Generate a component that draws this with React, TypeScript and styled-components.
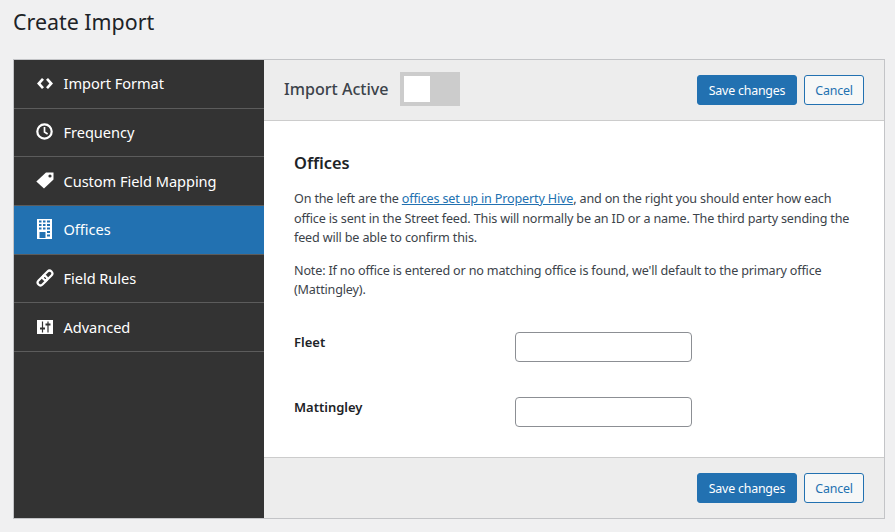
import React from 'react';
import styled, { createGlobalStyle } from 'styled-components';

const GlobalStyle = createGlobalStyle`
  html, body {
    margin: 0;
    padding: 0;
    background: #f0f0f1;
    font-family: "Noto Sans", "Open Sans", sans-serif;
    color: #3c434a;
    font-size: 13px;
    overflow: hidden;
  }
`;

const Page = styled.div`
  padding: 0 10px 0 13px;
  height: 532px;
  box-sizing: border-box;
`;

const Title = styled.h1`
  margin: 0;
  padding: 7px 0 0;
  height: 59px;
  box-sizing: border-box;
  font-size: 21.4px;
  line-height: 29px;
  font-weight: 400;
  color: #1d2327;
`;

const Panel = styled.div`
  display: flex;
  width: 872px;
  height: 460px;
  box-sizing: border-box;
  border: 1px solid #c3c4c7;
  background: #fff;
`;

const Sidebar = styled.nav`
  flex: 0 0 250px;
  background: #333;
`;

const NavItem = styled.a<{ $active?: boolean }>`
  display: flex;
  align-items: center;
  gap: 10.5px;
  height: 48.67px;
  box-sizing: border-box;
  padding: 0 0 1px 22px;
  border-bottom: 1px solid #5c5c5c;
  background: ${(p) => (p.$active ? '#2271b1' : 'transparent')};
  color: #fff;
  font-size: 14.6px;
  letter-spacing: -0.05px;
`;

const IconBox = styled.span`
  display: flex;
  align-items: center;
  justify-content: center;
  width: 17px;
  height: 20px;
`;

const Main = styled.div`
  flex: 1;
  display: flex;
  flex-direction: column;
  min-width: 0;
`;

const Bar = styled.div<{ $bottom?: boolean }>`
  flex: 0 0 61px;
  display: flex;
  align-items: center;
  justify-content: space-between;
  box-sizing: border-box;
  padding: 0 20px;
  background: #ededed;
  border-${(p) => (p.$bottom ? 'top' : 'bottom')}: 1px solid #ccc;
`;

const BarEnd = styled.div`
  margin-left: auto;
  display: flex;
  gap: 7px;
`;

const ActiveGroup = styled.div`
  display: flex;
  align-items: center;
  gap: 11px;
  margin-bottom: 2px;
`;

const ActiveLabel = styled.span`
  font-size: 16.1px;
  font-weight: 500;
  color: #3c434a;
`;

const Toggle = styled.div`
  width: 60px;
  height: 34px;
  box-sizing: border-box;
  padding: 4px;
  background: #ccc;
`;

const Knob = styled.div`
  width: 26px;
  height: 26px;
  background: #fff;
`;

const Button = styled.button<{ $primary?: boolean }>`
  height: 30px;
  width: ${(p) => (p.$primary ? '100px' : '60px')};
  box-sizing: border-box;
  padding: 1px 0 0;
  border-radius: 3px;
  border: 1px solid #2271b1;
  background: ${(p) => (p.$primary ? '#2271b1' : '#f6f7f7')};
  color: ${(p) => (p.$primary ? '#fff' : '#2271b1')};
  font-family: inherit;
  font-size: 12.4px;
  letter-spacing: -0.2px;
  line-height: 26px;
`;

const Content = styled.div`
  flex: 1;
  min-height: 0;
  padding: 31px 30px 0;
  background: #fff;
`;

const Heading = styled.h2`
  margin: 0 0 16px;
  font-size: 16.4px;
  line-height: 21px;
  font-weight: 600;
  color: #1d2327;
`;

const Paragraph = styled.p`
  margin: 0 0 13px;
  font-size: 12.6px;
  letter-spacing: -0.17px;
  line-height: 19.5px;
  color: #3c434a;
`;

const TextLink = styled.a`
  color: #2271b1;
  text-decoration: underline;
`;

const FieldList = styled.div`
  display: grid;
  row-gap: 35px;
  padding-top: 19px;
`;

const FieldRow = styled.div`
  display: flex;
  align-items: flex-start;
`;

const FieldLabel = styled.label`
  flex: 0 0 221px;
  padding-top: 1px;
  font-size: 13px;
  line-height: 18px;
  font-weight: 600;
  color: #1d2327;
`;

const FieldInput = styled.input`
  width: 177px;
  height: 30px;
  box-sizing: border-box;
  border: 1px solid #8c8f94;
  border-radius: 4px;
  background: #fff;
`;

const CodeIcon = () => (
  <svg width="16" height="11" viewBox="0 0 16 11" fill="#fff">
    <path d="M5 0 L0 5.5 L5 11 L7 9.2 L3.6 5.5 L7 1.8Z" />
    <path d="M11 0 L16 5.5 L11 11 L9 9.2 L12.4 5.5 L9 1.8Z" />
  </svg>
);

const ClockIcon = () => (
  <svg width="17" height="17" viewBox="0 0 17 17" fill="none" stroke="#fff">
    <circle cx="8.5" cy="8.5" r="7.2" strokeWidth="2.2" />
    <path d="M8.5 4 V9 L11.6 11" strokeWidth="1.7" />
  </svg>
);

const TagIcon = () => (
  <svg width="18" height="17" viewBox="0 0 18 17" style={{ margin: '0 -1px' }}>
    <path fill="#fff" d="M10 0.5 H17.5 V7.5 L8 16.5 L0.3 9.5Z" />
    <circle cx="14" cy="4" r="1.6" fill="#333" />
  </svg>
);

const BuildingIcon = () => (
  <svg width="15" height="20" viewBox="0 0 15 20">
    <path
      fill="#fff"
      fillRule="evenodd"
      d="M0 0 H15 V20 H0Z M2 1.5 V3.5 H4.5 V1.5Z M6 1.5 V3.5 H8.5 V1.5Z M10 1.5 V3.5 H13 V1.5Z M2 5 V7 H4.5 V5Z M6 5 V7 H8.5 V5Z M10 5 V7 H13 V5Z M2 8.5 V10.5 H4.5 V8.5Z M6 8.5 V10.5 H8.5 V8.5Z M10 8.5 V10.5 H13 V8.5Z M2.5 13 V19 H8.5 V13Z M10 12 V14 H13 V12Z M10 15.5 V17.5 H13 V15.5Z"
    />
  </svg>
);

const LinkIcon = () => (
  <svg width="18" height="18" viewBox="0 0 18 18" fill="none" stroke="#fff" strokeWidth="2.2" style={{ margin: '0 -1px' }}>
    <rect x="8.8" y="0.9" width="5.6" height="11" rx="2.8" transform="rotate(45 11.6 6.4)" />
    <rect x="3.6" y="6.1" width="5.6" height="11" rx="2.8" transform="rotate(45 6.4 11.6)" />
  </svg>
);

const SlidersIcon = () => (
  <svg width="16" height="14" viewBox="0 0 16 14">
    <rect width="16" height="14" fill="#fff" />
    <path stroke="#333" strokeWidth="1.2" fill="none" d="M5.5 1.5 V12.5 M11 1.5 V12.5" />
    <path stroke="#333" strokeWidth="1.8" fill="none" d="M3 8.5 H8 M8.5 4.5 H13.5" />
  </svg>
);

const navItems = [
  { label: 'Import Format', icon: <CodeIcon /> },
  { label: 'Frequency', icon: <ClockIcon /> },
  { label: 'Custom Field Mapping', icon: <TagIcon /> },
  { label: 'Offices', icon: <BuildingIcon />, active: true },
  { label: 'Field Rules', icon: <LinkIcon /> },
  { label: 'Advanced', icon: <SlidersIcon /> },
];

const Actions = () => (
  <BarEnd>
    <Button $primary>Save changes</Button>
    <Button>Cancel</Button>
  </BarEnd>
);

const App: React.FC = () => (
  <Page>
    <GlobalStyle />
    <Title>Create Import</Title>
    <Panel>
      <Sidebar>
        {navItems.map((item) => (
          <NavItem key={item.label} $active={item.active}>
            <IconBox>{item.icon}</IconBox>
            {item.label}
          </NavItem>
        ))}
      </Sidebar>
      <Main>
        <Bar>
          <ActiveGroup>
            <ActiveLabel>Import Active</ActiveLabel>
            <Toggle>
              <Knob />
            </Toggle>
          </ActiveGroup>
          <Actions />
        </Bar>
        <Content>
          <Heading>Offices</Heading>
          <Paragraph>
            On the left are the <TextLink>offices set up in Property Hive</TextLink>, and on the right you should
            enter how each office is sent in the Street feed. This will normally be an ID or a name. The third party
            sending the feed will be able to confirm this.
          </Paragraph>
          <Paragraph>
            Note: If no office is entered or no matching office is found, we'll default to the primary office
            (Mattingley).
          </Paragraph>
          <FieldList>
            <FieldRow>
              <FieldLabel>Fleet</FieldLabel>
              <FieldInput />
            </FieldRow>
            <FieldRow>
              <FieldLabel>Mattingley</FieldLabel>
              <FieldInput />
            </FieldRow>
          </FieldList>
        </Content>
        <Bar $bottom>
          <Actions />
        </Bar>
      </Main>
    </Panel>
  </Page>
);

export default App;
